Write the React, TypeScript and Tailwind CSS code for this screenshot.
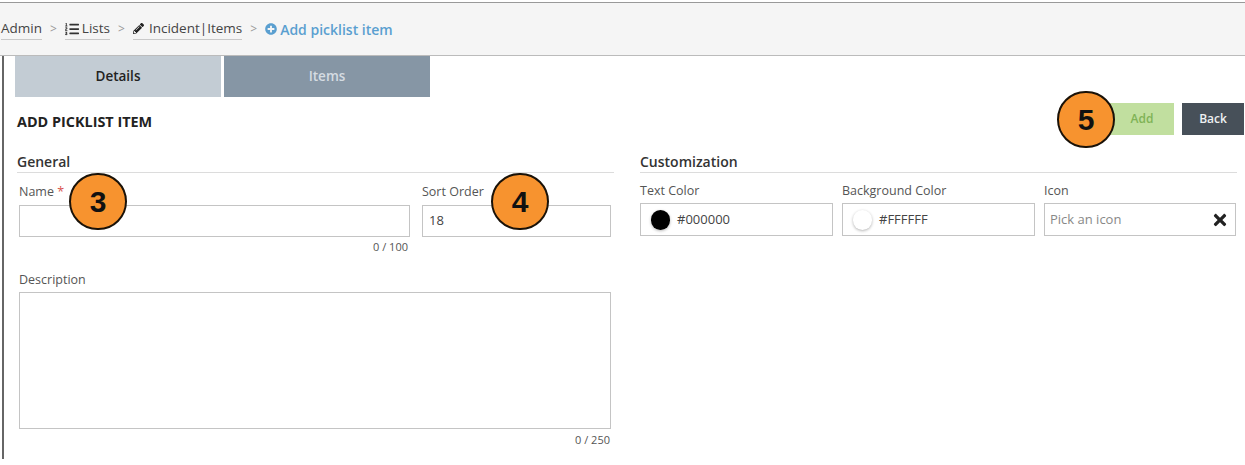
/**
 * App -- Add picklist item form with breadcrumb, tabs and numbered callouts.
 */

import type { ReactNode } from "react";
import { FaListOl, FaPencilAlt, FaPlusCircle, FaTimes } from "react-icons/fa";

function Callout({ n, className }: { n: number; className: string }) {
  return (
    <div
      className={[
        "absolute flex h-[57px] w-[58px] items-center justify-center rounded-full border-2 border-[#1a1208] bg-[#f7932f] font-['Liberation_Sans',sans-serif] text-[30px] font-bold text-[#111]",
        className,
      ].join(" ")}
    >
      {n}
    </div>
  );
}

function Crumb({ children }: { children: ReactNode }) {
  return (
    <span className="flex h-[21px] items-center gap-[3px] border-b border-[#c9c9c9] text-[#444]">
      {children}
    </span>
  );
}

function Sep() {
  return <span className="mx-[8px] text-[12px] text-[#999]">&gt;</span>;
}

function Label({ children }: { children: ReactNode }) {
  return <div className="h-[19px] text-[12.5px] leading-[19px] text-[#555]">{children}</div>;
}

function Heading({ children }: { children: ReactNode }) {
  return (
    <div className="h-[22px] border-b border-[#dcdcdc] text-[14px] font-semibold leading-[22px] text-[#333]">
      {children}
    </div>
  );
}

function ColorField({ label, value, swatch }: { label: string; value: string; swatch: string }) {
  return (
    <div className="w-[193px]">
      <Label>{label}</Label>
      <div className="mt-[3px] flex h-[33px] items-center border border-[#c4c4c4] pl-[10px] text-[13px] text-[#444]">
        <span className={["h-[20px] w-[19px] rounded-full shadow-[0_1px_3px_rgba(0,0,0,0.3)]", swatch].join(" ")} />
        <span className="ml-[7px]">{value}</span>
      </div>
    </div>
  );
}

export default function App() {
  return (
    <div className="relative h-[465px] w-[1245px] overflow-hidden bg-white font-['Open_Sans',sans-serif]">
      {/* Breadcrumb */}
      <div className="mt-[2px] flex h-[54px] items-center border-t border-b border-t-[#999] border-b-[#bbb] bg-[#f5f5f5] pl-[1px] text-[13.5px]">
        <Crumb>Admin</Crumb>
        <Sep />
        <Crumb>
          <FaListOl className="h-[14px] w-[14px] text-[#333]" />
          Lists
        </Crumb>
        <Sep />
        <Crumb>
          <FaPencilAlt className="h-[11px] w-[11px] text-[#222]" />
          <span className="ml-[2px]">Incident|Items</span>
        </Crumb>
        <Sep />
        <span className="flex items-center gap-[3px] text-[14px] font-semibold text-[#5a9fd0]">
          <FaPlusCircle className="h-[12px] w-[12px]" />
          Add picklist item
        </span>
      </div>

      {/* Main panel */}
      <div className="ml-[2px] h-[403px] border-l-2 border-[#666]">
        <div className="ml-[11px] flex gap-[3px] text-[13.5px]">
          <div className="flex h-[41px] w-[206px] items-center justify-center bg-[#c3ccd4] font-semibold text-[#222]">
            Details
          </div>
          <div className="flex h-[41px] w-[206px] items-center justify-center bg-[#8696a5] font-semibold text-[#d5dce2]">
            Items
          </div>
        </div>

        {/* Title row */}
        <div className="mt-[6px] flex h-[32px] items-start justify-between pr-[1px]">
          <div className="ml-[13px] mt-[11px] text-[14.4px] font-bold leading-[16px] text-[#222]">ADD PICKLIST ITEM</div>
          <div className="flex gap-[8px] text-[12px] font-semibold">
            <div className="flex h-[32px] w-[64px] items-center justify-center bg-[#c1df9f] text-[#7fb356]">Add</div>
            <div className="flex h-[32px] w-[62px] items-center justify-center bg-[#475059] text-[#eef0f2]">Back</div>
          </div>
        </div>

        <div className="mt-[16px] flex">
          {/* General */}
          <div className="ml-[13px] w-[597px]">
            <Heading>General</Heading>
            <div className="ml-[2px] mt-[9px] flex gap-[12px]">
              <div className="w-[391px]">
                <Label>
                  Name <span className="text-[#d9534f]">*</span>
                </Label>
                <div className="mt-[4px] h-[32px] border border-[#c4c4c4]" />
                <div className="mt-[2px] pr-[2px] text-right text-[11px] leading-[16px] text-[#555]">0 / 100</div>
              </div>
              <div className="w-[189px]">
                <Label>Sort Order</Label>
                <div className="mt-[4px] flex h-[32px] items-center border border-[#c4c4c4] pl-[6px] text-[13px] text-[#444]">
                  18
                </div>
              </div>
            </div>
            <div className="ml-[2px] mt-[15px]">
              <Label>Description</Label>
              <div className="mt-[3px] h-[137px] w-[592px] border border-[#c4c4c4]" />
              <div className="mt-[3px] w-[592px] pr-[1px] text-right text-[11px] leading-[16px] text-[#555]">0 / 250</div>
            </div>
          </div>

          {/* Customization */}
          <div className="ml-[26px] w-[597px]">
            <Heading>Customization</Heading>
            <div className="mt-[8px] flex gap-[9px]">
              <ColorField label="Text Color" value="#000000" swatch="bg-black" />
              <ColorField label="Background Color" value="#FFFFFF" swatch="bg-white" />
              <div className="w-[192px]">
                <Label>Icon</Label>
                <div className="mt-[3px] flex h-[33px] items-center justify-between border border-[#c4c4c4] pl-[5px] pr-[6px] text-[13px] text-[#888]">
                  Pick an icon
                  <FaTimes className="h-[18px] w-[18px] text-[#222]" />
                </div>
              </div>
            </div>
          </div>
        </div>
      </div>

      {/* Numbered callouts */}
      <Callout n={3} className="left-[69px] top-[173px]" />
      <Callout n={4} className="left-[491px] top-[173px]" />
      <Callout n={5} className="left-[1057px] top-[91px]" />
    </div>
  );
}
